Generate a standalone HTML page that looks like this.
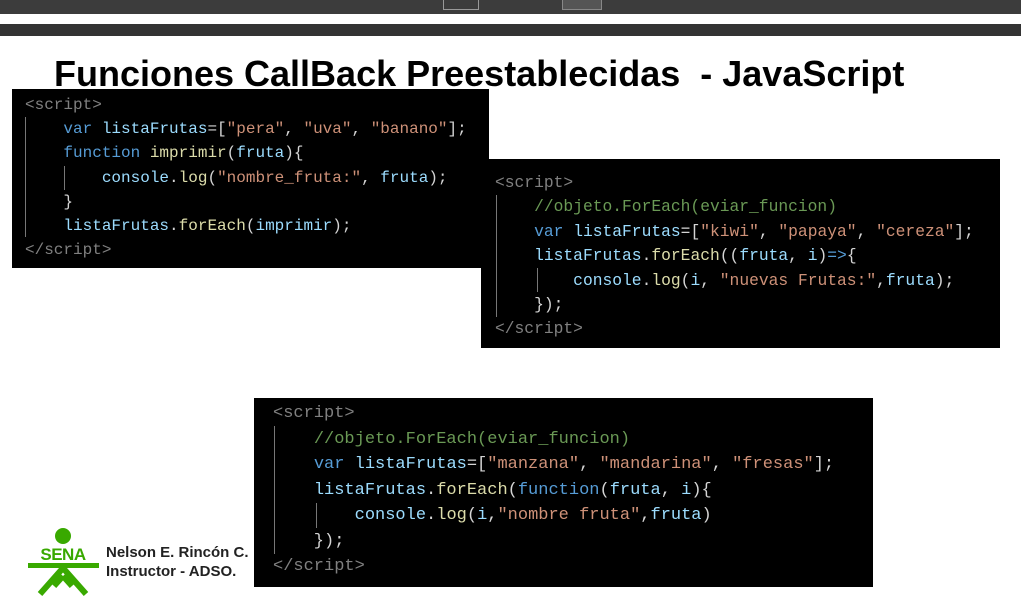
<!DOCTYPE html><html><head><style>
body{margin:0;width:1021px;height:609px;background:#fff;position:relative;overflow:hidden;font-family:"Liberation Sans",sans-serif}
.b{position:absolute;background:#000;}
.c{position:absolute;font-family:"Liberation Mono",monospace;white-space:pre;color:#d4d4d4}
.t{color:#808080}.k{color:#569cd6}.v{color:#9cdcfe}.s{color:#ce9178}.f{color:#dcdcaa}.g{color:#6a9955}
.ln{position:absolute;width:1px;background:#777}
</style></head><body>
<div style="position:absolute;left:0;top:0;width:1021px;height:14px;background:#3c3c3c"></div>
<div style="position:absolute;left:443px;top:0;width:34px;height:9px;border:1px solid #999;border-top:none"></div>
<div style="position:absolute;left:562px;top:0;width:38px;height:9px;background:#555;border:1px solid #888;border-top:none"></div>
<div style="position:absolute;left:0;top:24px;width:1021px;height:12px;background:#333"></div>
<div style="position:absolute;left:54px;top:53px;font-size:36px;font-weight:bold;color:#000;letter-spacing:0px;white-space:pre">Funciones CallBack Preestablecidas  - JavaScript</div>

<div class="b" style="left:12px;top:89px;width:477px;height:179px"></div>
<div class="ln" style="left:25px;top:117px;height:120px"></div>
<div class="ln" style="left:64px;top:166px;height:24px"></div>
<div class="c" style="left:25px;top:93px;font-size:16px;line-height:24.2px"><span class="t">&lt;script&gt;</span>
    <span class="k">var</span> <span class="v">listaFrutas</span>=[<span class="s">"pera"</span>, <span class="s">"uva"</span>, <span class="s">"banano"</span>];
    <span class="k">function</span> <span class="f">imprimir</span>(<span class="v">fruta</span>){
        <span class="v">console</span>.<span class="f">log</span>(<span class="s">"nombre_fruta:"</span>, <span class="v">fruta</span>);
    }
    <span class="v">listaFrutas</span>.<span class="f">forEach</span>(<span class="v">imprimir</span>);
<span class="t">&lt;/script&gt;</span></div>

<div class="b" style="left:481px;top:159px;width:519px;height:189px"></div>
<div class="ln" style="left:496px;top:195px;height:122px"></div>
<div class="ln" style="left:537px;top:268px;height:24px"></div>
<div class="c" style="left:495px;top:171px;font-size:16.3px;line-height:24.4px"><span class="t">&lt;script&gt;</span>
    <span class="g">//objeto.ForEach(eviar_funcion)</span>
    <span class="k">var</span> <span class="v">listaFrutas</span>=[<span class="s">"kiwi"</span>, <span class="s">"papaya"</span>, <span class="s">"cereza"</span>];
    <span class="v">listaFrutas</span>.<span class="f">forEach</span>((<span class="v">fruta</span>, <span class="v">i</span>)<span class="k">=&gt;</span>{
        <span class="v">console</span>.<span class="f">log</span>(<span class="v">i</span>, <span class="s">"nuevas Frutas:"</span>,<span class="v">fruta</span>);
    });
<span class="t">&lt;/script&gt;</span></div>

<div class="b" style="left:254px;top:398px;width:619px;height:189px"></div>
<div class="ln" style="left:274px;top:426px;height:128px"></div>
<div class="ln" style="left:316px;top:503px;height:25px"></div>
<div class="c" style="left:273px;top:401px;font-size:17px;line-height:25.5px"><span class="t">&lt;script&gt;</span>
    <span class="g">//objeto.ForEach(eviar_funcion)</span>
    <span class="k">var</span> <span class="v">listaFrutas</span>=[<span class="s">"manzana"</span>, <span class="s">"mandarina"</span>, <span class="s">"fresas"</span>];
    <span class="v">listaFrutas</span>.<span class="f">forEach</span>(<span class="k">function</span>(<span class="v">fruta</span>, <span class="v">i</span>){
        <span class="v">console</span>.<span class="f">log</span>(<span class="v">i</span>,<span class="s">"nombre fruta"</span>,<span class="v">fruta</span>)
    });
<span class="t">&lt;/script&gt;</span></div>

<svg style="position:absolute;left:26px;top:526px" width="76" height="70" viewBox="0 0 76 70">
<circle cx="37" cy="10" r="8" fill="#39a900"/>
<text x="37" y="34" text-anchor="middle" font-family="Liberation Sans" font-weight="bold" font-size="17" fill="#39a900" letter-spacing="-0.5">SENA</text>
<rect x="2" y="37" width="71" height="5" fill="#39a900"/>
<path d="M37 42 L14 68 M37 42 L60 68 M37 50 L28 60 M37 50 L46 60" stroke="#39a900" stroke-width="6" fill="none"/>
</svg>
<div style="position:absolute;left:106px;top:543px;font-size:15px;font-weight:bold;color:#222;line-height:19px">Nelson E. Rincón C.<br>Instructor - ADSO.</div>
</body></html>
